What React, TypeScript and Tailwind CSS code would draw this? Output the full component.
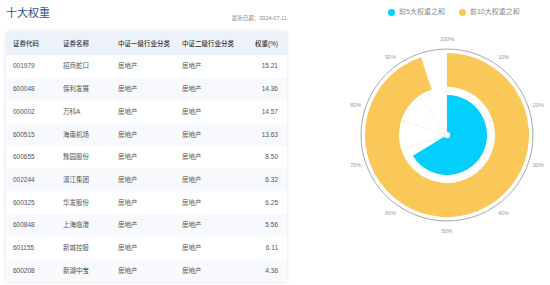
import type { ReactNode } from "react";

const FONT = "font-['Liberation_Sans','Noto_Sans_CJK_SC',sans-serif]";

const ROWS = [
  { code: "001979", name: "招商蛇口", w: "15.21" },
  { code: "600048", name: "保利发展", w: "14.36" },
  { code: "000002", name: "万科A", w: "14.57" },
  { code: "600515", name: "海南机场", w: "13.63" },
  { code: "600655", name: "豫园股份", w: "8.50" },
  { code: "002244", name: "滨江集团", w: "6.32" },
  { code: "600325", name: "华发股份", w: "6.25" },
  { code: "600848", name: "上海临港", w: "5.56" },
  { code: "601155", name: "新城控股", w: "6.11" },
  { code: "600208", name: "新湖中宝", w: "4.36" },
];

const BLUE = "#02cffc";
const YELLOW = "#fac858";

const CX = 157;
const CY = 111;

function pt(r: number, deg: number) {
  const a = (deg * Math.PI) / 180;
  return [CX + r * Math.sin(a), CY - r * Math.cos(a)];
}

// annulus sector, clockwise from 12 o'clock
function sector(r0: number, r1: number, from: number, to: number) {
  const large = to - from > 180 ? 1 : 0;
  const [x1, y1] = pt(r1, from);
  const [x2, y2] = pt(r1, to);
  const [x3, y3] = pt(r0, to);
  const [x4, y4] = pt(r0, from);
  return `M${x1} ${y1} A${r1} ${r1} 0 ${large} 1 ${x2} ${y2} L${x3} ${y3} A${r0} ${r0} 0 ${large} 0 ${x4} ${y4} Z`;
}

function Cell({ children, right }: { children: ReactNode; right?: boolean }) {
  return <div className={right ? "text-right" : ""}>{children}</div>;
}

function WeightTable() {
  return (
    <div className="rounded-[2px] bg-white shadow-[0_0_4px_rgba(0,0,0,0.12)] overflow-hidden">
      <div className="grid h-[23px] grid-cols-[50px_55px_64px_64px_1fr] items-center bg-[#edf2f9] pl-[7px] pr-[9px] text-[6.5px] font-medium text-[#333]">
        <Cell>证券代码</Cell>
        <Cell>证券名称</Cell>
        <Cell>中证一级行业分类</Cell>
        <Cell>中证二级行业分类</Cell>
        <Cell right>权重(%)</Cell>
      </div>
      {ROWS.map((r, i) => (
        <div
          key={r.code}
          className={`grid h-[22.7px] grid-cols-[50px_55px_64px_64px_1fr] items-center pl-[7px] pr-[9px] text-[6.5px] text-[#555] ${
            i % 2 ? "bg-[#f7f9fc]" : "bg-white"
          }`}
        >
          <Cell>{r.code}</Cell>
          <Cell>{r.name}</Cell>
          <Cell>房地产</Cell>
          <Cell>房地产</Cell>
          <Cell right>{r.w}</Cell>
        </div>
      ))}
    </div>
  );
}

function PolarChart() {
  const ticks = [0, 10, 20, 30, 40, 50, 60, 70, 80, 90];
  return (
    <svg width="260" height="240" viewBox="0 0 260 240">
      {/* split lines sit under the bars */}
      {ticks.map((t) => {
        const [x, y] = pt(82, t * 3.6);
        return <line key={t} x1={CX} y1={CY} x2={x} y2={y} stroke="#e6e9ee" strokeWidth="0.6" />;
      })}
      <circle cx={CX} cy={CY} r={86} fill="none" stroke="#a8a8a8" strokeWidth="1" />
      <path d={sector(48, 82, 0, 341.5)} fill={YELLOW} />
      <path d={sector(2, 40, 0, 238.6)} fill={BLUE} />
      <circle cx={CX} cy={CY} r={3} fill="#fff" stroke="#e3e6ea" strokeWidth="0.6" />
      {ticks.map((t) => {
        const [x, y] = pt(96, t * 3.6);
        return (
          <text
            key={t}
            x={x}
            y={y + 2}
            textAnchor="middle"
            fontSize="5.5"
            fill="#999"
            fontFamily="'Liberation Sans', sans-serif"
          >
            {t === 0 ? "100%" : `${t}%`}
          </text>
        );
      })}
    </svg>
  );
}

export default function App() {
  return (
    <div className={`flex h-[285px] w-[550px] overflow-hidden bg-white ${FONT}`}>
      <div className="w-[290px] shrink-0 pl-[6px] pr-[3px]">
        <div className="flex h-[32px] items-start justify-between">
          <h1 className="mt-[6px] text-[11px] leading-[14px] text-[#2d5190]">十大权重</h1>
          <span className="mt-[14px] text-[5.5px] text-[#888]">最新日期：2024-07-11</span>
        </div>
        <WeightTable />
      </div>
      <div className="flex flex-col">
        <div className="flex h-[24px] items-center gap-[4px] pl-[98px] text-[7px] text-[#888]">
          <span className="h-[7px] w-[7px] rounded-full bg-[#02cffc]" />
          <span>前5大权重之和</span>
          <span className="ml-[10px] h-[7px] w-[7px] rounded-full bg-[#fac858]" />
          <span>前10大权重之和</span>
        </div>
        <PolarChart />
      </div>
    </div>
  );
}
